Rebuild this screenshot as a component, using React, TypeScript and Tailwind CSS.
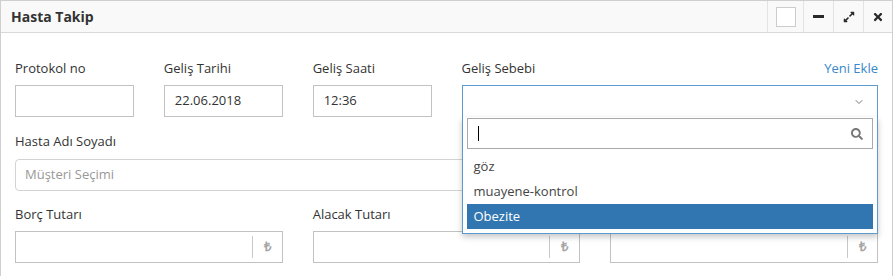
import { ChevronDown } from 'lucide-react'
import { FaExpandAlt, FaSearch, FaTimes } from 'react-icons/fa'

const Label = ({ children }: { children: React.ReactNode }) => (
  <div className="mb-[7px] text-[13px] leading-[20px] text-[#333]">{children}</div>
)

const TextBox = ({ value }: { value?: string }) => (
  <div className="flex h-[32px] items-center border border-[#c2c2c2] bg-white pl-[10px] text-[13px] text-[#333]">
    {value}
  </div>
)

const MoneyBox = () => (
  <div className="flex h-[32px] items-center border border-[#c2c2c2] bg-white">
    <div className="flex-1" />
    <div className="flex h-[22px] w-[30px] items-center justify-center border-l border-[#c8c8c8] text-[13px] font-bold text-[#a5a5a5]">
      ₺
    </div>
  </div>
)

const options = ['göz', 'muayene-kontrol', 'Obezite']

export default function App() {
  return (
    <div className="h-[276px] w-[894px] overflow-hidden bg-white font-['Open_Sans','Liberation_Sans',sans-serif]">
      <div className="h-full w-[893px] border-l border-r border-t border-[#cfcfcf]">
        {/* header */}
        <div className="flex h-[32px] items-stretch border-b border-[#d9d9d9] bg-[#f9f9f9]">
          <div className="flex items-center pl-[10px] text-[14px] font-bold text-[#333]">Hasta Takip</div>
          <div className="ml-auto flex">
            <div className="flex w-[36px] items-center justify-center border-l border-[#e3e3e3]">
              <div className="h-[20px] w-[20px] border border-[#cccccc] bg-white" />
            </div>
            <div className="flex w-[30px] items-center justify-center border-l border-[#e3e3e3]">
              <div className="h-[3px] w-[11px] bg-[#2a2a2a]" />
            </div>
            <div className="flex w-[30px] items-center justify-center border-l border-[#e3e3e3] text-[#2a2a2a]">
              <FaExpandAlt size={12} />
            </div>
            <div className="flex w-[29px] items-center justify-center border-l border-[#e3e3e3] text-[#2a2a2a]">
              <FaTimes size={12} />
            </div>
          </div>
        </div>

        {/* body */}
        <div className="pl-[14px] pr-[14px] pt-[25px]">
          <div className="grid grid-cols-12 gap-x-[30px]">
            <div className="col-span-2">
              <Label>Protokol no</Label>
              <TextBox />
            </div>
            <div className="col-span-2">
              <Label>Geliş Tarihi</Label>
              <TextBox value="22.06.2018" />
            </div>
            <div className="col-span-2">
              <Label>Geliş Saati</Label>
              <TextBox value="12:36" />
            </div>
            <div className="relative z-10 col-span-6">
              <div className="mb-[7px] flex justify-between text-[13px] leading-[20px]">
                <span className="text-[#333]">Geliş Sebebi</span>
                <span className="text-[#3a87c9]">Yeni Ekle</span>
              </div>
              <div className="relative">
                <div className="flex h-[32px] items-center justify-end border-l border-r border-t border-[#5b9bd1] bg-white pr-[12px]">
                  <ChevronDown size={12} strokeWidth={1.6} className="text-[#555]" />
                </div>
                <div className="absolute left-0 right-0 top-full border-b border-l border-r border-[#5b9bd1] bg-white px-[4px] pb-[4px] pt-[1px] shadow-[0_3px_6px_rgba(0,0,0,0.22)]">
                  <div className="flex h-[31px] items-center border border-[#aaaaaa] pl-[10px] pr-[9px]">
                    <span className="h-[15px] w-px bg-black" />
                    <FaSearch size={12} className="ml-auto text-[#777]" />
                  </div>
                  <div className="mt-[5px]">
                    {options.map((o) => (
                      <div
                        key={o}
                        className={
                          o === 'Obezite'
                            ? 'flex h-[25px] items-center bg-[#3276b1] pl-[7px] text-[13px] text-white'
                            : 'flex h-[25px] items-center pl-[7px] text-[13px] text-[#444]'
                        }
                      >
                        {o}
                      </div>
                    ))}
                  </div>
                </div>
              </div>
            </div>
          </div>

          <div className="mt-[14px]">
            <div className="mb-[8px] text-[13px] leading-[20px] text-[#333]">Hasta Adı Soyadı</div>
            <div className="flex h-[32px] items-center rounded-[4px] border border-[#d3d3d3] pl-[9px] text-[13px] text-[#999]">
              Müşteri Seçimi
            </div>
          </div>

          <div className="mt-[13px] grid grid-cols-12 gap-x-[30px]">
            <div className="col-span-4">
              <Label>Borç Tutarı</Label>
              <MoneyBox />
            </div>
            <div className="col-span-4">
              <Label>Alacak Tutarı</Label>
              <MoneyBox />
            </div>
            <div className="col-span-4">
              <Label>Kalan Tutar</Label>
              <MoneyBox />
            </div>
          </div>
        </div>
      </div>
    </div>
  )
}
